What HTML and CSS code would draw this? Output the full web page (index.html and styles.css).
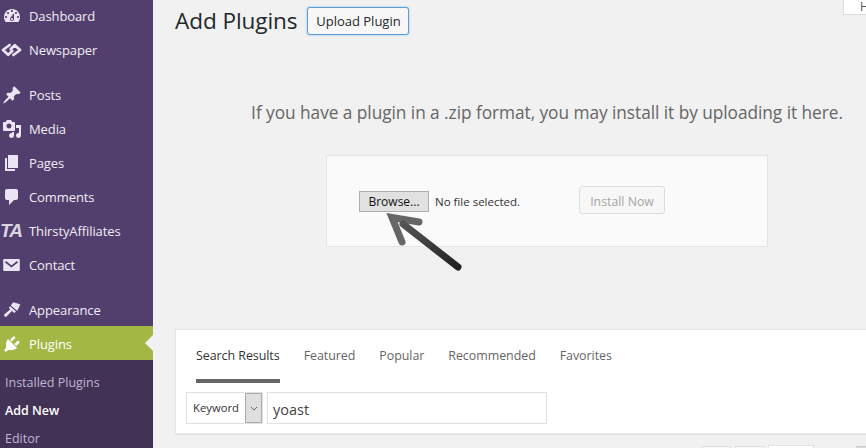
FILE: index.html
```html
<!DOCTYPE html>
<html lang="en">
<head>
<meta charset="utf-8">
<title>Add Plugins</title>
<link rel="stylesheet" href="styles.css">
</head>
<body>
<div class="page">
  <nav class="sidebar">
    <ul class="menu">
      <li class="item"><svg class="icon" viewBox="0 0 20 20"><path fill-rule="evenodd" d="M3.76 16h12.48c1.100-1.370 1.760-3.110 1.760-5 0-4.420-3.580-8-8-8s-8 3.580-8 8c0 1.890.66 3.630 1.760 5zM10 4c.55 0 1 .45 1 1s-.45 1-1 1-1-.45-1-1 .45-1 1-1zM6 6c.55 0 1 .45 1 1s-.45 1-1 1-1-.45-1-1 .45-1 1-1zm8 0c.55 0 1 .45 1 1s-.45 1-1 1-1-.45-1-1 .45-1 1-1zm-5.370 5.550L12 7v6c0 1.100-.9 2-2 2s-2-.9-2-2c0-.57.24-1.080.63-1.450zM4 10c.55 0 1 .45 1 1s-.45 1-1 1-1-.45-1-1 .45-1 1-1zm12 0c.55 0 1 .45 1 1s-.45 1-1 1-1-.45-1-1 .45-1 1-1zm-5 3c0-.55-.45-1-1-1s-1 .45-1 1 .45 1 1 1 1-.45 1-1z"/></svg><span>Dashboard</span></li>
      <li class="item"><svg class="icon icon-link" viewBox="0 0 22 14"><path class="link" d="M9 1.800L2 7l5.500 5 4.300-4M13 12.200L20 7l-5.500-5-4.300 4"/></svg><span>Newspaper</span></li>
      <li class="item group"><svg class="icon" viewBox="0 0 20 20"><path d="M10.440 3.020l1.820-1.820 6.360 6.350-1.830 1.820c-1.050-.68-2.480-.57-3.410.36l-.75.75c-.92.93-1.040 2.350-.35 3.410l-1.830 1.820-2.410-2.410-2.800 2.790c-.42.42-3.380 2.710-3.800 2.290s1.860-3.390 2.280-3.810l2.790-2.790L4.100 9.360l1.830-1.820c1.050.69 2.480.57 3.400-.36l.75-.75c.93-.92 1.050-2.350.36-3.410z"/></svg><span>Posts</span></li>
      <li class="item"><svg class="icon" viewBox="0 0 20 20"><path fill-rule="evenodd" d="M13 11V4c0-.55-.45-1-1-1h-1.670L9 1H5L3.670 3H2c-.55 0-1 .45-1 1v7c0 .55.45 1 1 1h10c.55 0 1-.45 1-1zM7 4.500c1.380 0 2.500 1.120 2.500 2.500S8.380 9.500 7 9.500 4.500 8.380 4.500 7 5.620 4.500 7 4.500zM14 6h5v10.500c0 1.380-1.120 2.500-2.500 2.500S14 17.880 14 16.500s1.120-2.500 2.500-2.500c.17 0 .34.02.5.05V9h-3V6zm-4 8.050V13h2v3.500c0 1.380-1.120 2.500-2.500 2.500S7 17.880 7 16.500 8.120 14 9.500 14c.17 0 .34.02.5.05z"/></svg><span>Media</span></li>
      <li class="item"><svg class="icon" viewBox="0 0 20 20"><path d="M6 15V2h10v13H6zm-1 1h8v2H3V5h2v11z"/></svg><span>Pages</span></li>
      <li class="item"><svg class="icon" viewBox="0 0 20 20"><path d="M5 2h9c1.100 0 2 .9 2 2v7c0 1.100-.9 2-2 2h-2l-5 5v-5H5c-1.100 0-2-.9-2-2V4c0-1.100.9-2 2-2z"/></svg><span>Comments</span></li>
      <li class="item"><b class="ta-icon">TA</b><span>ThirstyAffiliates</span></li>
      <li class="item"><svg class="icon icon-mail" viewBox="0 0 18 13"><path d="M1 0h16a1 1 0 0 1 1 1v11a1 1 0 0 1-1 1H1a1 1 0 0 1-1-1V1a1 1 0 0 1 1-1z"/><path class="cut" d="M2.500 3L9 8l6.500-5"/></svg><span>Contact</span></li>
      <li class="item group"><svg class="icon" viewBox="0 0 20 20"><path d="M11.200 2.200l7 2.100c-.7 2-1.600 4.700-3.100 6.400l-6.300-5.300zM8.100 6.200l5.900 5.400-1.500 1.300-2.700-1.900-5.200 5.400c-.6.600-2.200.2-2.500-.7-.2-.7.1-1.300.6-1.800l5.400-4.400-1.200-2z"/></svg><span>Appearance</span></li>
      <li class="item current"><svg class="icon" viewBox="0 0 20 20"><path d="M13.110 4.360L9.870 7.600 8 5.730l3.240-3.240c.35-.34 1.050-.2 1.560.32.52.51.66 1.210.31 1.550zm-8 1.770l.91-1.120 9.010 9.010-1.190.84c-.71.71-2.630 1.160-3.820 1.160H6.140L4.900 17.260c-.59.59-1.540.59-2.120 0-.59-.58-.59-1.530 0-2.120l1.240-1.240v-3.880c0-1.130.4-3.190 1.090-3.890zm7.260 3.970l3.240-3.240c.34-.35 1.040-.21 1.550.31.52.51.66 1.210.31 1.550l-3.240 3.250z"/></svg><span>Plugins</span></li>
    </ul>
    <ul class="submenu">
      <li>Installed Plugins</li>
      <li class="active">Add New</li>
      <li>Editor</li>
    </ul>
  </nav>

  <main class="content">
    <header class="heading">
      <h1>Add Plugins</h1>
      <button class="upload-btn" type="button">Upload Plugin</button>
    </header>

    <p class="help">If you have a plugin in a .zip format, you may install it by uploading it here.</p>

    <section class="upload-box">
      <button class="browse" type="button">Browse...</button>
      <span class="file-name">No file selected.</span>
      <button class="install" type="button" disabled>Install Now</button>
      <svg class="arrow" viewBox="0 0 100 70" aria-hidden="true">
        <defs>
          <linearGradient id="shaft" x1="0" y1="0" x2="1" y2="1">
            <stop offset="0" stop-color="#555"/>
            <stop offset="1" stop-color="#222"/>
          </linearGradient>
        </defs>
        <path class="arrow-head" d="M45 17L18 12.500 28 37"/>
        <path class="arrow-shaft" stroke="url(#shaft)" d="M29 19L84 62"/>
      </svg>
    </section>

    <section class="filter">
      <ul class="tabs">
        <li class="tab on">Search Results</li>
        <li class="tab">Featured</li>
        <li class="tab">Popular</li>
        <li class="tab">Recommended</li>
        <li class="tab">Favorites</li>
      </ul>
      <form class="search">
        <div class="select"><span class="select-label">Keyword</span><span class="select-arrow"><svg viewBox="0 0 10 6"><path d="M1 1l4 4 4-4"/></svg></span></div>
        <div class="term">yoast</div>
      </form>
    </section>

    <div class="pager">
      <span class="page-box"></span>
      <span class="page-box"></span>
      <span class="page-box page-current"></span>
      <span class="page-box page-next"></span>
    </div>
  </main>

  <div class="help-tab">Help</div>
</div>
</body>
</html>
```

FILE: styles.css
```css
* { box-sizing: border-box; }
html, body { margin: 0; height: 100%; }
body { background: #f1f1f1; font-family: "Open Sans", "Liberation Sans", sans-serif; overflow: hidden; }
ul { list-style: none; margin: 0; padding: 0; }
button { font-family: inherit; padding: 0; }

.page { position: relative; display: flex; width: 866px; height: 448px; overflow: hidden; }

.sidebar { flex: 0 0 153px; background: #523f6d; height: 448px; }
.menu { margin-top: -1px; }
.item { display: flex; align-items: center; height: 34px; color: #f1edf6; font-size: 13px; position: relative; }
.item span { position: absolute; left: 29px; letter-spacing: -.1px; }
.group { margin-top: 11px; }
.icon { width: 20px; height: 20px; margin-left: 2px; fill: #ebe4f4; flex: none; }
.icon-link { width: 21px; height: 14px; margin-left: 1px; }
.icon-mail { width: 17px; height: 12px; margin-left: 3px; }
.link { fill: none; stroke: #ebe4f4; stroke-width: 2.800; stroke-linecap: round; stroke-linejoin: round; }
.cut { fill: none; stroke: #523f6d; stroke-width: 1.800; }
.ta-icon { font: italic 700 19px "Liberation Sans", sans-serif; color: #d9d3e2; margin-left: 0; letter-spacing: -1px; }
.current { background: #a3b745; color: #fff; margin-top: -1px; padding-top: 1px; }
.current span { top: 9px; }
.current .icon { fill: #fff; }
.current::after { content: ""; position: absolute; right: 0; top: 9px; border: 8px solid transparent; border-left-width: 0; border-right-color: #f1f1f1; }

.submenu { background: #413256; height: 89px; padding-top: 9px; }
.submenu li { height: 28px; line-height: 28px; padding-left: 5px; font-size: 12.500px; color: #c0b6ce; }
.submenu .active { color: #fff; font-weight: 600; }

.content { flex: 0 0 744px; margin-left: 22px; display: flex; flex-direction: column; }
.content > * { flex: none; }
.heading { display: flex; align-items: flex-start; height: 44px; padding-top: 5px; }
h1 { margin: 0; font-size: 22.600px; line-height: 32px; font-weight: 400; color: #23282d; letter-spacing: -.1px; }
.upload-btn { margin: 2px 0 0 10px; width: 102px; height: 28px; font-size: 13px; color: #23282d; background: #f7f7f7; border: 1px solid #5b9dd9; border-radius: 3px; box-shadow: 0 0 2px rgba(30,140,190,.6); }

.help { margin: 0; height: 111px; padding-top: 56px; text-align: center; font-size: 17.300px; line-height: 26px; color: #666; white-space: nowrap; letter-spacing: -.05px; }

.upload-box { position: relative; margin-left: 151px; width: 442px; height: 92px; background: #fafafa; border: 1px solid #e5e5e5; display: flex; align-items: center; padding: 0 0 0 32px; }
.browse { width: 70px; height: 21px; background: #e1e1e1; border: 1px solid #adadad; font-size: 12px; color: #111; }
.file-name { margin: 0 0 0 6px; width: 144px; font-size: 11.500px; color: #333; }
.install { width: 86px; height: 28px; padding-top: 2px; background: #f7f7f7; border: 1px solid #ddd; border-radius: 3px; font-size: 12.300px; color: #a6a6a6; margin-top: -2px; }
.arrow { position: absolute; left: 47px; top: 49px; width: 100px; height: 70px; overflow: visible; }
.arrow-head { fill: none; stroke: #666; stroke-width: 7; stroke-linecap: round; stroke-linejoin: miter; }
.arrow-shaft { fill: none; stroke-width: 7; stroke-linecap: round; }

.filter { margin-top: 82px; height: 106px; background: #fff; border: 1px solid #e5e5e5; border-bottom-width: 2px; padding-left: 20px; width: 744px; }
.tabs { display: flex; gap: 24px; height: 53px; }
.tab { height: 53px; padding-top: 17px; font-size: 12.450px; line-height: 18px; color: #666; letter-spacing: -.05px; }
.tab.on { color: #333; border-bottom: 4px solid #666; }
.search { display: flex; margin: 9px 0 0 -10px; gap: 4px; }
.select { display: flex; width: 77px; height: 32px; background: #fff; border: 1px solid #e1e1e1; }
.select-label { flex: 1; padding-left: 6px; font-size: 11.300px; line-height: 30px; color: #333; }
.select-arrow { width: 17px; margin: 0; background: #dfdfdf; border: 1px solid #aaa; display: flex; align-items: center; justify-content: center; }
.select-arrow svg { width: 8px; height: 5px; fill: none; stroke: #444; stroke-width: 1; }
.term { width: 280px; height: 32px; border: 1px solid #e1e1e1; background: #fff; padding-left: 5px; font-size: 14.500px; line-height: 33px; color: #444; }

.pager { display: flex; gap: 4px; margin: 10px 0 0 527px; }
.page-box { width: 29px; height: 20px; background: #f7f7f7; border: 1px solid #e1e1e1; margin-top: 1px; }
.page-current { width: 46px; margin-top: 0; background: #fff; }
.page-next { margin-left: 38px; background: #dcdcdc; border-color: #ccc; }

.help-tab { position: absolute; left: 843px; top: -1px; width: 60px; height: 16px; background: #fff; border: 1px solid #ddd; padding-left: 16px; font-size: 12px; line-height: 14px; color: #555; }
```
